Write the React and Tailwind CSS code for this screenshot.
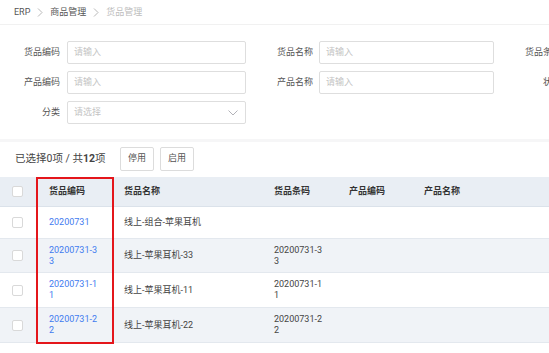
import React from "react";

const font = { fontFamily: 'Roboto, "Noto Sans CJK SC", sans-serif' };

function Chev() {
  return (
    <svg width="6" height="9" viewBox="0 0 6 9" className="mx-[7px]">
      <path d="M1 0.5 L5 4.5 L1 8.5" fill="none" stroke="#b0b0b0" strokeWidth="0.9" />
    </svg>
  );
}

function Field({ label, lw, gap, iw, placeholder = "请输入", select }) {
  return (
    <div className="flex items-center">
      <div className={`text-right text-[9px] text-[#555] ${lw}`}>{label}</div>
      {iw ? (
        <div
          className={`${gap} ${iw} h-[23px] border border-[#dedede] rounded-[2px] flex items-center justify-between pl-[6px] pr-[7px] bg-white`}
        >
          <span className="text-[9px] text-[#c4c4c4]">{placeholder}</span>
          {select && (
            <svg width="10" height="6" viewBox="0 0 10 6">
              <path d="M0.5 0.5 L5 5 L9.5 0.5" fill="none" stroke="#a9a9b0" strokeWidth="0.9" />
            </svg>
          )}
        </div>
      ) : null}
    </div>
  );
}

function Box() {
  return <div className="w-[11px] h-[11px] border border-[#d9d9d9] rounded-[2px] bg-white" />;
}

const rows = [
  { code: "20200731", name: "线上-组合-苹果耳机", bar: "", h: "h-[32px]", bg: "bg-white" },
  { code: "20200731-33", name: "线上-苹果耳机-33", bar: "20200731-33", h: "h-[34px]", bg: "bg-[#f0f3f7]" },
  { code: "20200731-11", name: "线上-苹果耳机-11", bar: "20200731-11", h: "h-[35px]", bg: "bg-white" },
  { code: "20200731-22", name: "线上-苹果耳机-22", bar: "20200731-22", h: "h-[35px]", bg: "bg-[#f0f3f7]" },
];

export default function App() {
  return (
    <div className="relative w-[549px] h-[353px] overflow-hidden bg-white" style={font}>
      {/* breadcrumb */}
      <div className="h-[25px] border-b border-[#f1f1f1] flex items-center pl-[14px] text-[9px] leading-[11px]">
        <span className="text-[#555]">ERP</span>
        <Chev />
        <span className="text-[#555]">商品管理</span>
        <Chev />
        <span className="text-[#bdbdbd]">货品管理</span>
      </div>

      {/* form */}
      <div className="pt-[16px] pb-[15px] flex flex-col gap-[7px]">
        <div className="flex items-center">
          <Field label="货品编码" lw="w-[60px]" gap="ml-[7px]" iw="w-[179px]" />
          <div className="ml-[19px]">
            <Field label="货品名称" lw="w-[48px]" gap="ml-[6px]" iw="w-[175px]" />
          </div>
          <div className="ml-[19px]">
            <Field label="货品条码" lw="w-[48px]" />
          </div>
        </div>
        <div className="flex items-center">
          <Field label="产品编码" lw="w-[60px]" gap="ml-[7px]" iw="w-[179px]" />
          <div className="ml-[19px]">
            <Field label="产品名称" lw="w-[48px]" gap="ml-[6px]" iw="w-[175px]" />
          </div>
          <div className="ml-[19px]">
            <Field label="状态" lw="w-[48px]" />
          </div>
        </div>
        <div className="flex items-center">
          <Field label="分类" lw="w-[60px]" gap="ml-[7px]" iw="w-[179px]" placeholder="请选择" select />
        </div>
      </div>

      <div className="h-[3px] bg-[#f6f6f7]" />

      {/* toolbar */}
      <div className="h-[35px] flex items-center pl-[15px] pb-[1px]">
        <span className="text-[10.5px] text-[#444] w-[105px]">
          已选择0项 / 共<b className="font-bold">12</b>项
        </span>
        <button className="w-[34px] h-[24px] border border-[#dcdcdc] rounded-[2px] bg-white text-[9px] text-[#555]">停用</button>
        <button className="ml-[6px] w-[34px] h-[24px] border border-[#dcdcdc] rounded-[2px] bg-white text-[9px] text-[#555]">启用</button>
      </div>

      {/* table */}
      <div className="text-[9px] leading-[11px]">
        <div className="h-[30px] flex items-center bg-[#e9eef4] border-b border-[#dbe2ea] font-semibold text-[#333]">
          <div className="w-[36px] pl-[12px]"><Box /></div>
          <div className="w-[76px] pl-[13px]">货品编码</div>
          <div className="w-[150px] pl-[12px]">货品名称</div>
          <div className="w-[75px] pl-[12px]">货品条码</div>
          <div className="w-[75px] pl-[12px]">产品编码</div>
          <div className="pl-[12px]">产品名称</div>
        </div>
        {rows.map((r, i) => (
          <div key={i} className={`${r.h} ${r.bg} flex items-center border-b border-[#e3e8ee] text-[#444]`}>
            <div className="w-[36px] pl-[12px]"><Box /></div>
            <div className="w-[76px] pl-[13px]">
              <div className="w-[51px] break-all text-[#3f7bef]">{r.code}</div>
            </div>
            <div className="w-[150px] pl-[12px]">{r.name}</div>
            <div className="w-[75px] pl-[12px]">
              <div className="w-[51px] break-all">{r.bar}</div>
            </div>
            <div className="w-[75px] pl-[12px]" />
            <div className="pl-[12px]" />
          </div>
        ))}
      </div>

      {/* annotation */}
      <div className="absolute left-[36px] top-[177px] w-[78px] h-[167px] border-2 border-[#e4161b]" />
    </div>
  );
}
